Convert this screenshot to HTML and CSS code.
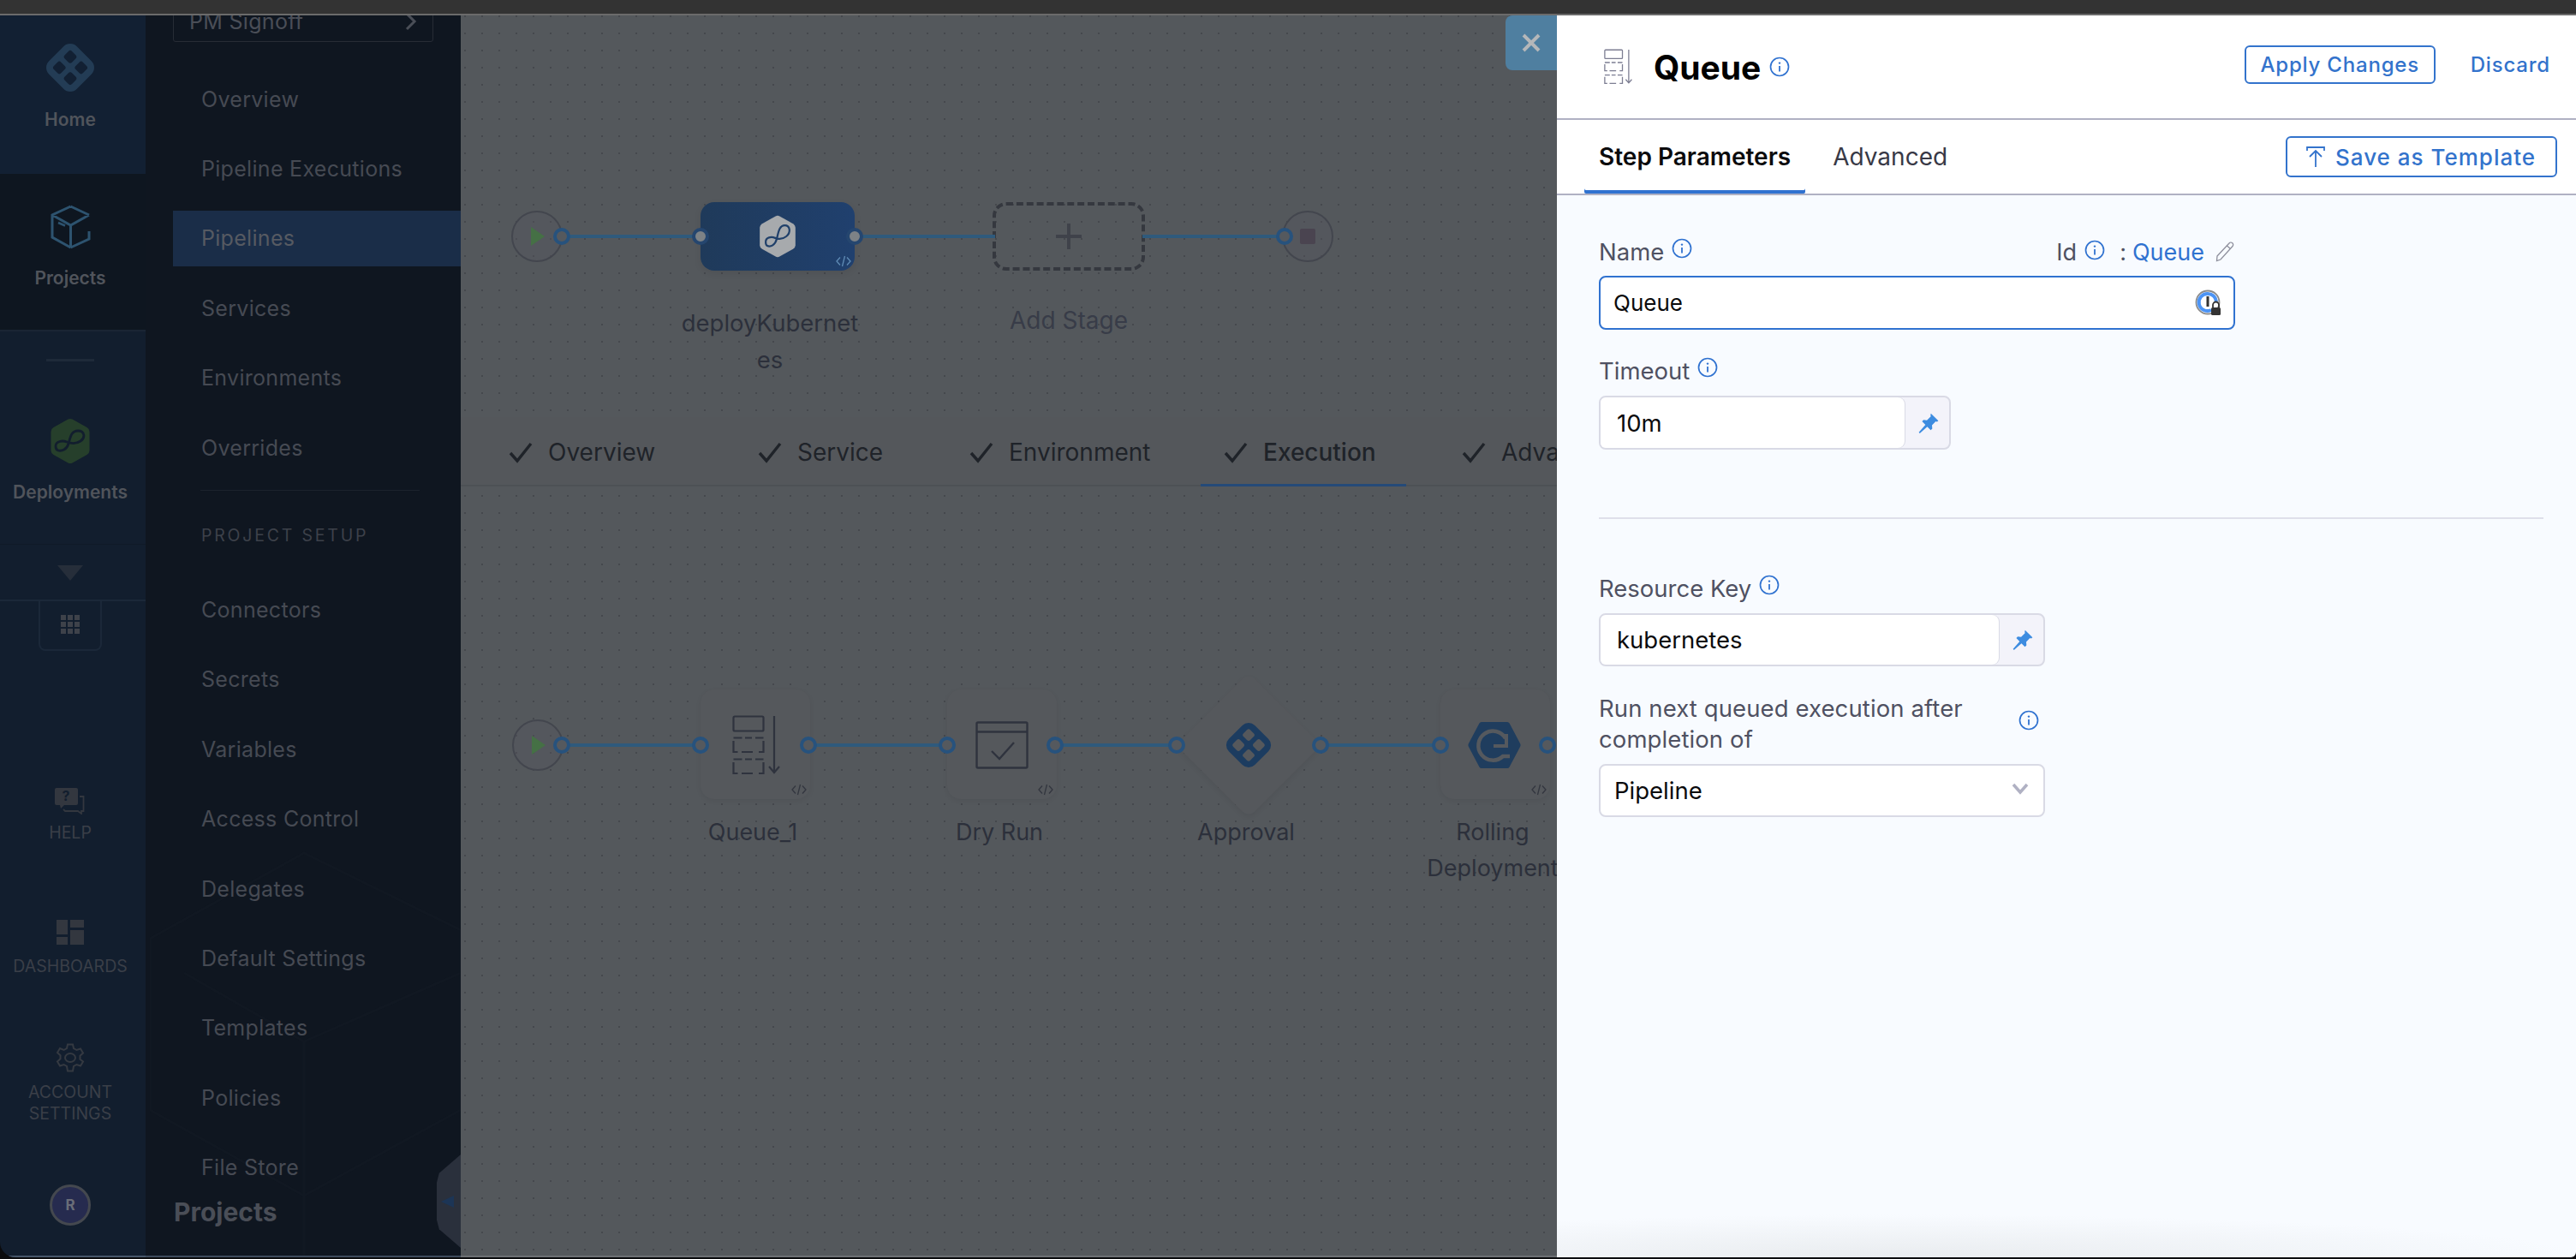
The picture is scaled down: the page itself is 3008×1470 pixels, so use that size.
FILE: index.html
```html
<!DOCTYPE html>
<html lang="en">
<head>
    <meta charset="UTF-8">
    <meta name="viewport" content="width=device-width, initial-scale=1.0">
    <title>Pipeline Studio</title>
    <link rel="stylesheet" href="styles.css">
</head>
<body>

<svg class="defs" width="0" height="0">
    <defs>
        <mask id="diamondHoles">
            <rect width="60" height="60" fill="#fff"/>
            <g transform="rotate(45 30 30)" fill="#000">
                <rect x="15" y="15" width="12" height="12" rx="3"/>
                <rect x="33" y="15" width="12" height="12" rx="3"/>
                <rect x="15" y="33" width="12" height="12" rx="3"/>
                <rect x="33" y="33" width="12" height="12" rx="3"/>
            </g>
        </mask>
        <symbol id="info" viewBox="0 0 24 24">
            <circle cx="12" cy="12" r="10.5" fill="none" stroke="currentColor" stroke-width="1.7"/>
            <circle cx="12" cy="7.6" r="1.2" fill="currentColor"/>
            <path d="M12 11v6.5" stroke="currentColor" stroke-width="1.8" fill="none"/>
        </symbol>
        <symbol id="pin" viewBox="0 0 24 24">
            <path d="M14.5 1.5l8 8-1.4 1-1.4-.3-4 4.2.3 3.6-1.7 1.6-3.7-3.7L2.5 23l-1-1 7.100-8.100-3.600-3.700 1.600-1.600 3.600.3 4.200-4-.3-1.400z" fill="currentColor"/>
        </symbol>
        <symbol id="code" viewBox="0 0 18 14">
            <path d="M5 2.500L1 7l4 4.500M13 2.500L17 7l-4 4.500M10.500 1L7.500 13" fill="none" stroke="currentColor" stroke-width="1.300"/>
        </symbol>
        <symbol id="check" viewBox="0 0 28 28">
            <path d="M2 15l8 9L26 4" fill="none" stroke="currentColor" stroke-width="3.400"/>
        </symbol>
        <symbol id="queue" viewBox="0 0 56 70">
            <g fill="none" stroke="currentColor" stroke-width="2.200">
                <rect x="1.500" y="1.500" width="35" height="17" rx="1.500"/>
                <path d="M1.500 26.500h10M15 26.500h8M27 26.500h9.500M1.500 30v8M36.500 30v8M1.500 38v5h5M11 43h13M31 43h5.500v-5"/>
                <path d="M1.500 51.500h10M15 51.500h8M27 51.500h9.500M1.500 55v8M36.500 55v8M1.500 63v5h5M11 68h13M31 68h5.500v-5"/>
                <path d="M49 1v66M43 60l6 7 6-7"/>
            </g>
        </symbol>
        <symbol id="hexLoop" viewBox="0 0 48 54">
            <path d="M21.500 1.500a6 6 0 0 1 5 0l17 9.500a6 6 0 0 1 3 5v22a6 6 0 0 1-3 5l-17 9.500a6 6 0 0 1-5 0l-17-9.500a6 6 0 0 1-3-5V16a6 6 0 0 1 3-5z" fill="currentColor"/>
        </symbol>
    </defs>
</svg>

<div class="top-strip"></div>

<div class="app">

    <!-- main nav rail -->
    <nav class="rail">
        <div class="rail-cell rail-home">
            <svg class="rail-logo" viewBox="0 0 60 60">
                <g mask="url(#diamondHoles)"><rect x="7" y="7" width="46" height="46" rx="11" fill="#233c55" transform="rotate(45 30 30)"/></g>
            </svg>
            <span class="rail-label">Home</span>
        </div>
        <div class="rail-cell rail-projects">
            <svg class="rail-box" viewBox="0 0 47 52" fill="none" stroke="#2d536f" stroke-width="3">
                <path d="M23.500 2L45 12M23.500 2L2 12v26l21.500 12M2 12l21.500 12L45 12M23.500 24v26M23.500 50L45 40v-9"/>
                <path d="M9 21l8 3.500" stroke-width="2.500"/>
            </svg>
            <span class="rail-label">Projects</span>
        </div>
        <div class="rail-modules">
            <div class="rail-sep"></div>
            <svg class="rail-hex" viewBox="0 0 48 54">
                <use href="#hexLoop" color="#263f2b"/>
                <path d="M7 33C7 27 15 26 20 28C25 30 30 31 36 27C42 23 41 15 33 15C25 15 24 23 22 30C20 37 14 39 10 38C8 37.500 7 35 7 33Z" fill="none" stroke="#121e2e" stroke-width="2.800"/>
            </svg>
            <span class="rail-label">Deployments</span>
        </div>
        <div class="rail-more"><div class="more-arrow"></div></div>
        <div class="rail-grid-btn">
            <div class="grid-icon">
                <i></i><i></i><i></i><i></i><i></i><i></i><i></i><i></i><i></i>
            </div>
        </div>

        <div class="rail-bottom">
            <div class="rail-link link-help">
                <svg class="link-icon" width="35" height="31" viewBox="0 0 35 31">
                    <path d="M2 0h23a2 2 0 0 1 2 2v16a2 2 0 0 1-2 2H11l-4 4-1-4H2a2 2 0 0 1-2-2V2a2 2 0 0 1 2-2z" fill="#33373f"/>
                    <path d="M29 10h4.500v17H31v3l-4-3H12l-2-2" fill="none" stroke="#33373f" stroke-width="1.800"/>
                    <text x="13" y="15" class="help-mark">?</text>
                </svg>
                <span>HELP</span>
            </div>
            <div class="rail-link link-dash">
                <div class="dash-icon"><i></i><i></i><i></i><i></i></div>
                <span>DASHBOARDS</span>
            </div>
            <div class="rail-link link-account">
                <svg class="link-icon" width="34" height="34" viewBox="0 0 34 34" fill="none" stroke="#343941" stroke-width="2">
                    <path d="M14 1.500h6l1 4.500 3.500 2 4.500-1.500 3 5-3.500 3.200v4L32 21.500l-3 5-4.500-1.500-3.500 2-1 5.500h-6l-1-5.500-3.500-2L5 26.500l-3-5 3.500-3.300v-4L2 11l3-5 4.500 2L13 6z"/>
                    <ellipse cx="17" cy="17" rx="6" ry="5"/>
                </svg>
                <span>ACCOUNT<br>SETTINGS</span>
            </div>
            <div class="avatar">R</div>
        </div>
    </nav>

    <!-- project menu -->
    <aside class="side-menu">
        <svg class="watermark" viewBox="0 0 363 500" fill="none" stroke="#111822" stroke-width="3">
            <path d="M0 130L180 30l183 90v210L180 430 0 330z"/>
            <path d="M40 170l140 80 183-80M180 250v250"/>
        </svg>
        <div class="project-select">
            <span>PM Signoff</span>
            <svg width="14" height="22" viewBox="0 0 14 22" fill="none" stroke="#4a4e57" stroke-width="3"><path d="M2 2l9 9-9 9"/></svg>
        </div>
        <ul class="menu-list">
            <li>Overview</li>
            <li>Pipeline Executions</li>
            <li class="active">Pipelines</li>
            <li>Services</li>
            <li>Environments</li>
            <li>Overrides</li>
        </ul>
        <div class="menu-sep"></div>
        <div class="menu-heading">PROJECT SETUP</div>
        <ul class="menu-list">
            <li>Connectors</li>
            <li>Secrets</li>
            <li>Variables</li>
            <li>Access Control</li>
            <li>Delegates</li>
            <li>Default Settings</li>
            <li>Templates</li>
            <li>Policies</li>
            <li>File Store</li>
        </ul>
        <div class="menu-title">Projects</div>
        <div class="collapse-tab"><div class="collapse-arrow"></div></div>
    </aside>

    <!-- pipeline studio canvas -->
    <main class="canvas">
        <section class="graph stage-graph">
            <div class="stage-node">
                <svg class="stage-hex" viewBox="0 0 48 54">
                    <use href="#hexLoop" color="#a7aaad"/>
                    <path d="M9 34C9 28 16 27 21 29C26 31 30 31 35 27C41 22 40 13 33 13C26 13 25 22 23 30C21 38 15 41 11 39C9 38 9 36 9 34Z" fill="none" stroke="#20406a" stroke-width="2.400"/>
                </svg>
                <svg class="code-mark code-light"><use href="#code"/></svg>
            </div>
            <div class="add-stage"><span class="plus"></span></div>
            <div class="node-label label-deploy">deployKubernet<br>es</div>
            <div class="node-label label-add">Add Stage</div>
            <svg class="wires" width="1280" height="469">
                <g class="wire">
                    <path d="M118 258H280M460 258H624M796 258H962"/>
                </g>
                <circle class="ends" cx="89" cy="258" r="29"/>
                <path class="start-mark" d="M82 247l16 11-16 11z"/>
                <circle class="ends" cx="989" cy="258" r="29"/>
                <rect class="end-mark" x="980" y="249" width="18" height="18" rx="2"/>
                <circle class="port" cx="118" cy="258" r="8"/>
                <circle class="port port-node" cx="280" cy="258" r="8"/>
                <circle class="port port-node" cx="460" cy="258" r="8"/>
                <circle class="port" cx="962" cy="258" r="8"/>
            </svg>
        </section>

        <div class="stage-tabs">
            <div class="stage-tab"><svg class="tab-check"><use href="#check"/></svg>Overview</div>
            <div class="stage-tab"><svg class="tab-check"><use href="#check"/></svg>Service</div>
            <div class="stage-tab"><svg class="tab-check"><use href="#check"/></svg>Environment</div>
            <div class="stage-tab active"><svg class="tab-check"><use href="#check"/></svg>Execution</div>
            <div class="stage-tab"><svg class="tab-check"><use href="#check"/></svg>Advanced</div>
        </div>

        <section class="graph step-graph">
            <div class="step-node step-queue">
                <svg class="step-icon queue-icon"><use href="#queue"/></svg>
                <svg class="code-mark"><use href="#code"/></svg>
            </div>
            <div class="step-node step-dry">
                <svg class="step-icon dry-icon" viewBox="0 0 62 56" fill="none" stroke="currentColor" stroke-width="2.400">
                    <rect x="1.500" y="1.500" width="59" height="53" rx="1.500"/>
                    <path d="M1.500 12.500h59M19 35l9 9 17-19"/>
                </svg>
                <svg class="code-mark"><use href="#code"/></svg>
            </div>
            <div class="approval-shape"></div>
            <svg class="approval-icon" viewBox="0 0 60 60">
                <g mask="url(#diamondHoles)"><rect x="7" y="7" width="46" height="46" rx="11" fill="#1c3c60" transform="rotate(45 30 30)"/></g>
            </svg>
            <div class="step-node step-rolling">
                <svg class="step-icon rolling-icon" viewBox="0 0 62 56">
                    <path d="M16 1h30a3 3 0 0 1 2.600 1.500L61 26a4 4 0 0 1 0 4L48.600 53.500A3 3 0 0 1 46 55H16a3 3 0 0 1-2.600-1.500L1 30a4 4 0 0 1 0-4L13.400 2.500A3 3 0 0 1 16 1z" fill="#1f3d5e"/>
                    <path d="M44 20a17 17 0 1 0-3 21h8" fill="none" stroke="#55595e" stroke-width="4.500"/>
                    <path d="M30 29h15V15" fill="none" stroke="#55595e" stroke-width="4"/>
                </svg>
                <svg class="code-mark"><use href="#code"/></svg>
            </div>
            <div class="node-label label-queue">Queue_1</div>
            <div class="node-label label-dry">Dry Run</div>
            <div class="node-label label-approval">Approval</div>
            <div class="node-label label-rolling">Rolling<br>Deployment</div>
            <svg class="wires" width="1280" height="900">
                <g class="wire">
                    <path d="M118 302H280M406 302H568M694 302H836M1004 302H1144"/>
                </g>
                <circle class="ends" cx="90" cy="302" r="29"/>
                <path class="start-mark" d="M83 291l16 11-16 11z"/>
                <circle class="port" cx="118" cy="302" r="8"/>
                <circle class="port" cx="280" cy="302" r="8"/>
                <circle class="port" cx="406" cy="302" r="8"/>
                <circle class="port" cx="568" cy="302" r="8"/>
                <circle class="port" cx="694" cy="302" r="8"/>
                <circle class="port" cx="836" cy="302" r="8"/>
                <circle class="port" cx="1004" cy="302" r="8"/>
                <circle class="port" cx="1144" cy="302" r="8"/>
                <circle class="port" cx="1269" cy="302" r="8"/>
            </svg>
        </section>
    </main>

    <!-- step config drawer -->
    <section class="drawer">
        <button class="drawer-close" type="button">
            <svg width="22" height="22" viewBox="0 0 22 22" fill="none" stroke="#b5b7b9" stroke-width="4"><path d="M2 2l18 18M20 2L2 20"/></svg>
        </button>

        <header class="drawer-head">
            <svg class="head-icon"><use href="#queue"/></svg>
            <h1>Queue</h1>
            <svg class="info head-info"><use href="#info"/></svg>
            <button class="btn btn-apply" type="button">Apply Changes</button>
            <a class="discard">Discard</a>
        </header>

        <div class="drawer-tabs">
            <div class="drawer-tab active">Step Parameters</div>
            <div class="drawer-tab">Advanced</div>
            <button class="btn btn-template" type="button">
                <svg width="22" height="24" viewBox="0 0 22 24" fill="none" stroke="currentColor" stroke-width="1.800"><path d="M1 5V1h20v4M11 24V6M4 12l7-7 7 7"/></svg>
                Save as Template
            </button>
        </div>

        <form class="drawer-body">
            <div class="name-row">
                <label class="field-label">Name <svg class="info"><use href="#info"/></svg></label>
                <div class="id-part">
                    <span>Id</span>
                    <svg class="info"><use href="#info"/></svg>
                    <span class="id-colon">:</span>
                    <span class="id-value">Queue</span>
                    <svg width="22" height="24" viewBox="0 0 22 24" fill="none" stroke="#8e8f9c" stroke-width="1.300"><path d="M2 17L16 2a2.500 2.500 0 0 1 4 3.500L6 21l-4.500 1.500zM13.500 5l4 3.500"/></svg>
                </div>
            </div>
            <div class="name-input">
                <input type="text" value="Queue">
                <svg class="onepass" width="32" height="32" viewBox="0 0 32 32">
                    <circle cx="15" cy="15" r="13.500" fill="none" stroke="#8b8b8b" stroke-width="1.800"/>
                    <path d="M15 5a10 10 0 1 0 4 19" fill="none" stroke="#4c94f5" stroke-width="4"/>
                    <path d="M15 5a10 10 0 0 1 10 9" fill="none" stroke="#4c94f5" stroke-width="4"/>
                    <rect x="13.500" y="8" width="3" height="12" fill="#333"/>
                    <rect x="19" y="21" width="11" height="9" rx="1.500" fill="#333"/>
                    <path d="M21 21v-3a3.500 3.500 0 0 1 7 0v3" fill="none" stroke="#333" stroke-width="1.800"/>
                </svg>
            </div>

            <label class="field-label label-gap">Timeout <svg class="info"><use href="#info"/></svg></label>
            <div class="pin-input pin-timeout">
                <input type="text" value="10m">
                <div class="pin-btn"><svg class="pin-icon"><use href="#pin"/></svg></div>
            </div>

            <div class="divider"></div>

            <label class="field-label">Resource Key <svg class="info"><use href="#info"/></svg></label>
            <div class="pin-input pin-key">
                <input type="text" value="kubernetes">
                <div class="pin-btn"><svg class="pin-icon"><use href="#pin"/></svg></div>
            </div>

            <div class="run-label">
                <span>Run next queued execution after completion of</span>
                <svg class="info"><use href="#info"/></svg>
            </div>
            <div class="select-wrap">
                <select>
                    <option>Pipeline</option>
                    <option>Stage</option>
                </select>
                <svg class="select-arrow" width="20" height="14" viewBox="0 0 20 14" fill="none" stroke="#b0b1c3" stroke-width="3.500"><path d="M2 2l8 9 8-9"/></svg>
            </div>
        </form>
    </section>
</div>

</body>
</html>
```

FILE: styles.css
```css
* {
    box-sizing: border-box;
}

html, body {
    margin: 0;
    height: 100%;
    overflow: hidden;
}

body {
    font-family: Inter, "Liberation Sans", sans-serif;
    background: #0b0c0e;
    display: flex;
    flex-direction: column;
}

.defs {
    position: absolute;
}

.top-strip {
    height: 18px;
    flex: none;
    background: #333;
    border-bottom: 2px solid #6b6b6b;
}

.app {
    height: 1450px;
    flex: none;
    display: flex;
    overflow: hidden;
    border-radius: 0 0 6px 18px;
}

/* nav rail */
.rail {
    width: 170px;
    flex: none;
    display: flex;
    flex-direction: column;
    background: #121e2e;
    border-bottom: 2px solid #46566a;
}

.rail-cell, .rail-modules, .rail-link {
    display: flex;
    flex-direction: column;
    align-items: center;
}

.rail-label {
    font-size: 21px;
    line-height: 24px;
    font-weight: 600;
    color: #50545b;
}

.rail-home {
    height: 185px;
    padding: 31px 6px 0 0;
    background: #122033;
}

.rail-logo {
    width: 60px;
    height: 60px;
    margin-bottom: 19px;
}

.rail-projects {
    height: 184px;
    padding: 36px 6px 0 0;
    background: #0e1620;
    border-bottom: 2px solid #1a2534;
}

.rail-box {
    width: 47px;
    height: 52px;
    margin-bottom: 22px;
}

.rail-modules {
    height: 248px;
    padding-right: 6px;
}

.rail-sep {
    width: 56px;
    height: 3px;
    margin: 32px 0 66px;
    background: #1e2a39;
}

.rail-hex {
    width: 48px;
    height: 54px;
    margin-bottom: 21px;
}

.rail-more {
    height: 67px;
    display: flex;
    justify-content: center;
    padding: 24px 6px 0 0;
    border-top: 1px solid #101a28;
    border-bottom: 2px solid #1b2839;
}

.more-arrow {
    width: 0;
    height: 0;
    border-left: 15px solid transparent;
    border-right: 15px solid transparent;
    border-top: 18px solid #262e3a;
}

.rail-grid-btn {
    width: 74px;
    height: 58px;
    margin-left: 45px;
    display: flex;
    align-items: center;
    justify-content: center;
    border: 2px solid #1b2839;
    border-top: 0;
    border-radius: 0 0 8px 8px;
}

.grid-icon {
    display: grid;
    grid-template-columns: repeat(3, 6px);
    grid-auto-rows: 6px;
    gap: 2px;
    margin-top: -2px;
}

.grid-icon i {
    background: #3e424a;
}

.rail-bottom {
    display: flex;
    flex-direction: column;
    align-items: center;
    padding-right: 6px;
}

.rail-link span {
    font-size: 19.500px;
    line-height: 25px;
    color: #3a3f48;
    text-align: center;
}

.link-help {
    margin-top: 160px;
}

.link-icon {
    display: block;
}

.link-help span {
    margin-top: 9px;
}

.help-mark {
    font-size: 16px;
    font-weight: 700;
    fill: #121e2e;
    text-anchor: middle;
}

.link-dash {
    margin-top: 89px;
}

.dash-icon {
    display: grid;
    grid-template-columns: 13px 16px;
    grid-template-rows: 13px 15px;
    gap: 3px;
    grid-auto-flow: row;
}

.dash-icon i {
    background: #33373f;
}

.dash-icon i:nth-child(1) {
    height: 17px;
}

.dash-icon i:nth-child(2) {
    height: 9px;
}

.dash-icon i:nth-child(3) {
    height: 9px;
    margin-top: 4px;
}

.dash-icon i:nth-child(4) {
    height: 17px;
    margin-top: -4px;
}

.link-dash span {
    margin-top: 11px;
}

.link-account {
    margin-top: 77px;
}

.link-account span {
    margin-top: 11px;
}

.avatar {
    width: 48px;
    height: 48px;
    margin-top: 70px;
    display: flex;
    align-items: center;
    justify-content: center;
    border: 3px solid #44484f;
    border-radius: 50%;
    background: #262b4f;
    color: #6a6d78;
    font-size: 17px;
    font-weight: 700;
}

/* project menu */
.side-menu {
    width: 368px;
    flex: none;
    position: relative;
    padding-left: 32px;
    background: #0f1620;
    border-bottom: 2px solid #3d4a5c;
}

.watermark {
    position: absolute;
    left: 5px;
    bottom: 0;
    width: 363px;
    height: 500px;
}

.project-select {
    position: relative;
    width: 304px;
    height: 60px;
    margin-top: -29px;
    padding: 12px 18px 0;
    display: flex;
    align-items: center;
    justify-content: space-between;
    border: 1px solid #272c35;
    border-radius: 3px;
    font-size: 25px;
    letter-spacing: .3px;
    color: #4a4e57;
}

.menu-list {
    position: relative;
    list-style: none;
    margin: 0;
    padding: 0;
}

.project-select + .menu-list {
    margin-top: 26px;
}

.menu-list li {
    height: 81.400px;
    padding-left: 33px;
    display: flex;
    align-items: center;
    font-size: 25px;
    letter-spacing: .3px;
    color: #464a53;
    border-radius: 4px 0 0 4px;
}

.menu-list li.active {
    background: linear-gradient(#1a2d48, #1a2d48) center / 100% 65px no-repeat;
    color: #565a62;
}

.menu-sep {
    width: 256px;
    height: 1px;
    margin: 9px 0 0 32px;
    background: #1b222d;
}

.menu-heading {
    margin: 40px 0 34px 33px;
    font-size: 19.500px;
    line-height: 24px;
    letter-spacing: 2.800px;
    color: #3d414a;
}

.menu-title {
    position: absolute;
    left: 33px;
    top: 1377px;
    font-size: 30px;
    line-height: 40px;
    font-weight: 700;
    color: #4a4e57;
}

.collapse-tab {
    position: absolute;
    right: 0;
    top: 1330px;
    width: 28px;
    height: 109px;
    background: #2a303c;
    clip-path: polygon(100% 0, 100% 100%, 10% 80%, 0 70%, 0 30%, 10% 20%);
    display: flex;
    align-items: center;
    padding-left: 5px;
}

.collapse-arrow {
    width: 0;
    height: 0;
    border-top: 7px solid transparent;
    border-bottom: 7px solid transparent;
    border-right: 15px solid #1c3556;
}

/* canvas */
.canvas {
    width: 1280px;
    flex: none;
    display: flex;
    flex-direction: column;
    overflow: hidden;
    background: #54585c;
    border-bottom: 2px solid #6d7074;
}

.graph {
    position: relative;
    background-image: radial-gradient(circle, #45484d 1px, transparent 1.300px);
    background-size: 20px 20px;
}

.stage-graph {
    height: 469px;
    flex: none;
    background-position: -5px -9px;
}

.step-graph {
    flex: 1;
    background-position: -5px 1px;
}

.wires {
    position: absolute;
    left: 0;
    top: 0;
    pointer-events: none;
}

.wire path {
    fill: none;
    stroke: #2f5a7c;
    stroke-width: 4;
}

.ends {
    fill: rgba(85, 86, 94, .35);
    stroke: #43464e;
    stroke-width: 2;
}

.start-mark {
    fill: #457045;
}

.end-mark {
    fill: #4a4450;
}

.port {
    fill: #55595e;
    stroke: #27527d;
    stroke-width: 4;
}

.port-node {
    fill: #7d8286;
    stroke: #25466f;
}

.node-label {
    position: absolute;
    width: 240px;
    text-align: center;
    font-size: 27px;
    line-height: 42px;
    color: #2c303b;
}

.stage-node {
    position: absolute;
    left: 280px;
    top: 218px;
    width: 180px;
    height: 80px;
    display: flex;
    align-items: center;
    justify-content: center;
    border-radius: 16px;
    background: linear-gradient(90deg, #1f3a5a, #20406e);
    box-shadow: 0 3px 8px rgba(0, 0, 0, .08);
}

.stage-hex {
    width: 46px;
    height: 50px;
}

.add-stage {
    position: absolute;
    left: 621px;
    top: 218px;
    width: 178px;
    height: 80px;
    display: flex;
    align-items: center;
    justify-content: center;
    border: 4px dashed #35383f;
    border-radius: 16px;
}

.plus {
    width: 30px;
    height: 30px;
    background:
        linear-gradient(#3f424a, #3f424a) center / 30px 4px no-repeat,
        linear-gradient(#3f424a, #3f424a) center / 4px 30px no-repeat;
}

.label-deploy {
    left: 241px;
    top: 338px;
    font-size: 27.500px;
    line-height: 43px;
}

.label-add {
    left: 590px;
    top: 334px;
    font-size: 28px;
    line-height: 44px;
    color: #383c48;
}

.code-mark {
    position: absolute;
    right: 4px;
    bottom: 4px;
    width: 18px;
    height: 14px;
    color: #33363f;
}

.code-light {
    color: #5f8bb5;
}

/* tabs under the stage graph */
.stage-tabs {
    height: 81px;
    flex: none;
    display: grid;
    grid-template-columns: 291px 247px 297px 278px 1fr;
    padding-left: 29px;
    border-bottom: 2px solid #4d5155;
    background: #54575b;
}

.stage-tab {
    justify-self: start;
    height: 81px;
    padding: 0 35px 0 27px;
    display: flex;
    align-items: center;
    gap: 18px;
    font-size: 28px;
    white-space: nowrap;
    color: #1f2329;
}

.stage-tab.active {
    box-shadow: inset 0 -3px 0 #254a78;
    font-weight: 500;
}

.tab-check {
    width: 28px;
    height: 28px;
}

/* step graph */
.step-node {
    position: absolute;
    top: 237px;
    width: 128px;
    height: 128px;
    border-radius: 16px;
    background: #55585c;
    box-shadow: 0 2px 6px rgba(0, 0, 0, .06);
}

.step-queue {
    left: 280px;
}

.step-dry {
    left: 568px;
}

.step-rolling {
    left: 1144px;
}

.step-icon {
    position: absolute;
    color: #2f333e;
}

.queue-icon {
    left: 37px;
    top: 30px;
    width: 56px;
    height: 70px;
}

.dry-icon {
    left: 33px;
    top: 37px;
    width: 62px;
    height: 56px;
}

.rolling-icon {
    left: 32px;
    top: 37px;
    width: 62px;
    height: 56px;
}

.approval-shape {
    position: absolute;
    left: 860px;
    top: 242px;
    width: 120px;
    height: 120px;
    transform: rotate(45deg);
    border-radius: 10px;
    background: #55585c;
    box-shadow: 2px 2px 6px rgba(0, 0, 0, .06);
}

.approval-icon {
    position: absolute;
    left: 892px;
    top: 274px;
    width: 56px;
    height: 56px;
}

.label-queue {
    left: 221px;
    top: 383px;
}

.label-dry {
    left: 509px;
    top: 383px;
}

.label-approval {
    left: 797px;
    top: 383px;
}

.label-rolling {
    left: 1085px;
    top: 383px;
}

/* drawer */
.drawer {
    position: relative;
    flex: 1;
    display: flex;
    flex-direction: column;
    background: radial-gradient(ellipse 800px 50px at 400px 100%, #e9ecef, transparent), #f8fbff;
}

.drawer-close {
    position: absolute;
    left: -60px;
    top: 0;
    width: 60px;
    height: 64px;
    padding: 0;
    display: flex;
    align-items: center;
    justify-content: center;
    border: 0;
    border-radius: 8px 0 0 8px;
    background: #4f7fa0;
}

.drawer-head {
    height: 122px;
    flex: none;
    padding: 0 31px 0 55px;
    display: flex;
    align-items: center;
    background: #fff;
    border-bottom: 2px solid #b0b1c3;
}

.head-icon {
    width: 33px;
    height: 42px;
    color: #7c7d92;
    margin-right: 25px;
    flex: none;
}

.drawer-head h1 {
    margin: 0;
    font-size: 39px;
    font-weight: 700;
    color: #000;
}

.info {
    width: 24px;
    height: 24px;
    color: #3072d0;
    flex: none;
}

.head-info {
    margin-left: 10px;
    margin-right: auto;
}

.btn {
    display: flex;
    align-items: center;
    background: #fff;
    border: 2px solid #3373cc;
    border-radius: 6px;
    font-family: inherit;
    font-size: 24px;
    font-weight: 500;
    letter-spacing: .8px;
    color: #3373cc;
}

.btn-apply {
    width: 223px;
    height: 45px;
    margin-bottom: 5px;
    justify-content: center;
    padding: 0;
}

.discard {
    margin: 0 0 5px 41px;
    font-size: 24px;
    font-weight: 500;
    letter-spacing: .8px;
    color: #3373cc;
}

.drawer-tabs {
    height: 88px;
    flex: none;
    padding: 0 23px 0 32px;
    display: flex;
    align-items: stretch;
    background: #fff;
    border-bottom: 2px solid #b0b1c3;
}

.drawer-tab {
    display: flex;
    align-items: center;
    padding: 0 17px;
    font-size: 28px;
    color: #383946;
    margin-right: 15px;
}

.drawer-tab.active {
    font-weight: 600;
    color: #0b0b0d;
    margin-right: 15px;
    box-shadow: inset 0 -4px 0 #3072d0;
    border-radius: 0 0 2px 2px;
}

.btn-template {
    width: 317px;
    height: 48px;
    margin: 19px 0 0 auto;
    padding: 0 0 0 22px;
    gap: 12px;
    font-size: 26px;
    letter-spacing: 1px;
}

.drawer-body {
    flex: 1;
    padding: 50px 39px 0 49px;
    display: flex;
    flex-direction: column;
    align-items: flex-start;
}

.field-label {
    display: flex;
    align-items: flex-start;
    gap: 9px;
    height: 32px;
    font-size: 27.500px;
    line-height: 32px;
    color: #4f5162;
}

.name-row {
    width: 742px;
    display: flex;
    justify-content: space-between;
}

.id-part {
    display: flex;
    align-items: center;
    height: 32px;
    font-size: 27px;
    color: #4f5162;
}

.id-part .info {
    margin: -4px 0 0 9px;
}

.id-colon {
    margin-left: 17px;
}

.id-value {
    margin: 0 13px 0 7px;
    color: #3072d0;
}

input, select {
    font-family: inherit;
    font-size: 27.500px;
    color: #0b0b0d;
    outline: none;
}

.name-input {
    position: relative;
    width: 743px;
    height: 63px;
    margin-top: 12px;
}

.name-input input {
    width: 100%;
    height: 100%;
    padding: 0 15px;
    border: 2px solid #3072d0;
    border-radius: 8px;
    background: #fff;
    font-size: 26px;
}

.onepass {
    position: absolute;
    right: 15px;
    top: 16px;
}

.label-gap {
    margin-top: 32px;
}

.pin-input {
    height: 63px;
    margin-top: 13px;
    display: flex;
    border: 2px solid #d9dae5;
    border-radius: 8px;
    background: #f3f3fa;
    overflow: hidden;
}

.pin-input input {
    flex: 1;
    min-width: 0;
    padding: 0 19px;
    border: 0;
    border-radius: 0 8px 8px 0;
    background: #fff;
    box-shadow: 1px 0 0 #d9dae5;
}

.pin-timeout {
    width: 411px;
}

.pin-key {
    width: 521px;
    height: 62px;
}

.pin-btn {
    width: 52px;
    flex: none;
    display: flex;
    align-items: center;
    justify-content: center;
    padding-left: 3px;
}

.pin-icon {
    width: 26px;
    height: 26px;
    color: #3d8ce0;
}

.divider {
    width: 1103px;
    height: 2px;
    margin: 79px 0 65px;
    background: #dfe0ea;
}

.run-label {
    width: 521px;
    margin-top: 31px;
    display: flex;
    align-items: center;
    justify-content: space-between;
    font-size: 27.500px;
    line-height: 36px;
    letter-spacing: .1px;
    color: #4f5162;
}

.run-label span {
    width: 450px;
}

.run-label .info {
    margin: -8px 7px 0 0;
}

.select-wrap {
    position: relative;
    width: 521px;
    height: 62px;
    margin-top: 11px;
}

.select-wrap select {
    width: 100%;
    height: 100%;
    padding: 0 16px;
    appearance: none;
    border: 2px solid #d9dae5;
    border-radius: 8px;
    background: #fff;
}

.select-arrow {
    position: absolute;
    right: 19px;
    top: 22px;
}
```
